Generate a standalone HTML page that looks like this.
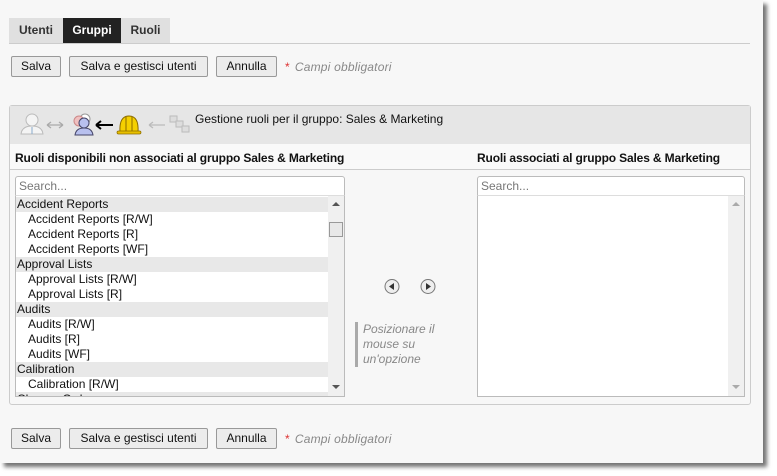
<!DOCTYPE html>
<html><head><meta charset="utf-8"><style>
*{box-sizing:border-box;margin:0;padding:0}
body{width:777px;height:476px;background:#fff;font-family:"Liberation Sans",Arial,sans-serif;font-size:12px;color:#111;position:relative;overflow:hidden}
.frame{position:absolute;left:0;top:0;width:763px;height:463px;background:#f7f7f7;box-shadow:4px 4px 4px rgba(0,0,0,.55)}
.abs{position:absolute}
.tab{position:absolute;top:18px;height:25px;line-height:25px;font-weight:bold;font-size:12px;text-align:center;background:#e0e0e0;color:#333}
.btn{position:absolute;height:21px;line-height:19px;border:1px solid #999;background:#ececec;border-radius:2px;text-align:center;font-size:12px;color:#111}
.req{position:absolute;font-style:italic;color:#888;font-size:12px;letter-spacing:.2px}
.req b{color:#d33;font-weight:normal;font-style:normal;margin-right:5px}
.list{position:absolute;background:#fff;border:1px solid #bbb;overflow:hidden}
.row{height:15px;line-height:15px;font-size:12px;white-space:nowrap}
.g{background:#e8e8e8;padding-left:1px}
.i{padding-left:12px}
.search{position:absolute;height:20px;border:1px solid #bbb;border-radius:3px 3px 0 0;background:#fff;color:#777;font-size:12px;line-height:18px;padding-left:3px}
.sb{position:absolute;right:0;top:0;bottom:0;width:16px;background:#f0f0f0}
.hd{position:absolute;top:45px;font-weight:bold;letter-spacing:-0.15px}
</style></head><body>
<div class="frame">
<div class="tab" style="left:9px;width:54px">Utenti</div>
<div class="tab" style="left:63px;width:58px;background:#222;color:#fff">Gruppi</div>
<div class="tab" style="left:121px;width:49px">Ruoli</div>
<div class="abs" style="left:9px;top:43px;width:741px;height:1px;background:#ccc"></div>

<div class="btn" style="left:11px;top:56px;width:50px">Salva</div>
<div class="btn" style="left:69px;top:56px;width:139px">Salva e gestisci utenti</div>
<div class="btn" style="left:216px;top:56px;width:61px">Annulla</div>
<div class="req" style="left:285px;top:60px"><b>*</b>Campi obbligatori</div>

<div class="abs" style="left:9px;top:105px;width:742px;height:300px;border:1px solid #ccc;border-radius:3px;background:#f7f7f7">
 <div class="abs" style="left:0;top:0;width:740px;height:38px;background:#e6e6e6"></div>
 <svg class="abs" style="left:8px;top:6px" width="180" height="26" viewBox="0 0 180 26">
  <circle cx="14" cy="8" r="6" fill="#f4f4f4" stroke="#bbb"/><path d="M3 22 Q4 14 14 14 Q24 14 25 22Z" fill="#f4f4f4" stroke="#bbb"/><line x1="14" y1="15" x2="14" y2="22" stroke="#8ac"/>
  <path d="M29 13 H45 M29 13 l4 -3 M29 13 l4 3 M45 13 l-4 -3 M45 13 l-4 3" stroke="#aaa" fill="none" stroke-width="1.3"/>
  <circle cx="67" cy="7" r="5" fill="#fff" stroke="#999"/><circle cx="61" cy="9" r="5" fill="#f0c0c0" stroke="#c88"/>
  <circle cx="66" cy="11" r="5" fill="#b8c0ee" stroke="#446"/><path d="M57 23 Q58 16 66 16 Q74 16 75 23Z" fill="#b8c0ee" stroke="#446"/>
  <path d="M78 13 H95 M78 13 l5 -4 M78 13 l5 4" stroke="#000" fill="none" stroke-width="2"/>
  <path d="M102 20 Q101 4 111 4 Q121 4 120 20Z" fill="#f5d000" stroke="#8a6a00"/><rect x="99" y="19" width="24" height="3" rx="1.5" fill="#e8c000" stroke="#8a6a00" stroke-width=".7"/><line x1="108" y1="5" x2="108" y2="19" stroke="#8a6a00"/><line x1="114" y1="5" x2="114" y2="19" stroke="#8a6a00"/>
  <path d="M131 13 H147 M131 13 l4 -3 M131 13 l4 3" stroke="#bbb" fill="none" stroke-width="1.3"/>
  <rect x="152" y="4" width="7" height="6" fill="#ddd" stroke="#bbb"/><rect x="158" y="9" width="7" height="6" fill="#ddd" stroke="#bbb"/><rect x="164" y="14" width="7" height="6" fill="#ddd" stroke="#bbb"/>
 </svg>
 <div class="abs" style="left:185px;top:6px;font-size:12px">Gestione ruoli per il gruppo: Sales &amp; Marketing</div>
 <div class="abs" style="left:0;top:38px;width:740px;height:26px;border-bottom:1px solid #ccc;background:#f9f9f9"></div>
 <div class="hd" style="left:5px">Ruoli disponibili non associati al gruppo Sales &amp; Marketing</div>
 <div class="hd" style="left:467px">Ruoli associati al gruppo Sales &amp; Marketing</div>
</div>

<div class="search" style="left:15px;top:176px;width:330px">Search...</div>
<div class="list" style="left:15px;top:195px;width:330px;height:202px;border-top:1px solid #ddd;padding-top:1px">
 <div class="row g" style="margin-right:16px">Accident Reports</div>
 <div class="row i">Accident Reports [R/W]</div>
 <div class="row i">Accident Reports [R]</div>
 <div class="row i">Accident Reports [WF]</div>
 <div class="row g" style="margin-right:16px">Approval Lists</div>
 <div class="row i">Approval Lists [R/W]</div>
 <div class="row i">Approval Lists [R]</div>
 <div class="row g" style="margin-right:16px">Audits</div>
 <div class="row i">Audits [R/W]</div>
 <div class="row i">Audits [R]</div>
 <div class="row i">Audits [WF]</div>
 <div class="row g" style="margin-right:16px">Calibration</div>
 <div class="row i">Calibration [R/W]</div>
 <div class="row g" style="margin-right:16px">Change Orders</div>
 <div class="sb"><div style="position:absolute;left:4px;top:6px;border:4px solid transparent;border-bottom:4px solid #555;border-top:0;width:0"></div>
  <div style="position:absolute;left:1px;top:26px;width:14px;height:15px;background:#e8e8e8;border:1px solid #999"></div>
  <div style="position:absolute;left:4px;bottom:7px;border:4px solid transparent;border-top:4px solid #555;border-bottom:0;width:0"></div></div>
</div>

<svg class="abs" style="left:384px;top:278px" width="54" height="17">
 <circle cx="8" cy="8.5" r="7" fill="#eee" stroke="#777"/><path d="M5 8.5 L10 5 V12Z" fill="#333"/>
 <circle cx="44" cy="8.5" r="7" fill="#eee" stroke="#777"/><path d="M47 8.5 L42 5 V12Z" fill="#333"/>
</svg>
<div class="abs" style="left:355px;top:322px;width:3px;height:45px;background:#aaa"></div>
<div class="abs" style="left:363px;top:322px;font-style:italic;color:#888;line-height:15px;font-size:12px">Posizionare il<br>mouse su<br>un'opzione</div>

<div class="search" style="left:477px;top:176px;width:268px">Search...</div>
<div class="list" style="left:477px;top:195px;width:268px;height:202px;border-top:1px solid #ddd">
 <div class="sb"><div style="position:absolute;left:4px;top:6px;border:4px solid transparent;border-bottom:4px solid #aaa;border-top:0;width:0"></div>
  <div style="position:absolute;left:4px;bottom:7px;border:4px solid transparent;border-top:4px solid #aaa;border-bottom:0;width:0"></div></div>
</div>

<div class="btn" style="left:11px;top:428px;width:50px">Salva</div>
<div class="btn" style="left:69px;top:428px;width:139px">Salva e gestisci utenti</div>
<div class="btn" style="left:216px;top:428px;width:61px">Annulla</div>
<div class="req" style="left:285px;top:432px"><b>*</b>Campi obbligatori</div>
</div>
</body></html>
